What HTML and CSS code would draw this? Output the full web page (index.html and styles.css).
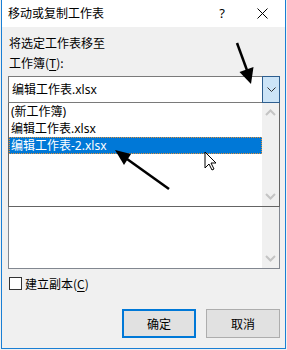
FILE: index.html
```html
<!DOCTYPE html>
<html lang="zh-CN">
<head>
<meta charset="utf-8">
<title>移动或复制工作表</title>
<link rel="stylesheet" href="styles.css">
</head>
<body>
<div class="window">
  <div class="titlebar">
    <span class="title">移动或复制工作表</span>
    <span class="tbtn help">?</span>
    <span class="tbtn close">
      <svg width="11" height="11" viewBox="0 0 11 11"><path d="M0.5 0.5 L10.5 10.5 M10.5 0.5 L0.5 10.5" stroke="#000" stroke-width="1"/></svg>
    </span>
  </div>
  <div class="content">
    <div class="label">将选定工作表移至</div>
    <div class="label">工作簿(<u>T</u>):</div>
    <div class="combo">
      <div class="combo-text">编辑工作表.xlsx</div>
      <div class="combo-btn">
        <svg width="9" height="6" viewBox="0 0 9 6"><path d="M0.5 0.5 L4.5 4.5 L8.5 0.5" fill="none" stroke="#333" stroke-width="1"/></svg>
      </div>
      <div class="popup">
        <div class="popup-items">
          <div class="item">(新工作簿)</div>
          <div class="item">编辑工作表.xlsx</div>
          <div class="item selected">编辑工作表-2.xlsx</div>
        </div>
        <div class="vscroll">
          <svg class="chev" width="11" height="7" viewBox="0 0 11 7"><path d="M1 6 L5.5 1.5 L10 6" fill="none" stroke="#c4c4c4" stroke-width="2"/></svg>
          <svg class="chev" width="11" height="7" viewBox="0 0 11 7"><path d="M1 1 L5.5 5.5 L10 1" fill="none" stroke="#c4c4c4" stroke-width="2"/></svg>
        </div>
      </div>
    </div>
    <div class="listbox">
      <div class="list-area"></div>
      <div class="vscroll">
        <svg class="chev" width="11" height="7" viewBox="0 0 11 7"><path d="M1 6 L5.5 1.5 L10 6" fill="none" stroke="#c4c4c4" stroke-width="2"/></svg>
        <svg class="chev" width="11" height="7" viewBox="0 0 11 7"><path d="M1 1 L5.5 5.5 L10 1" fill="none" stroke="#c4c4c4" stroke-width="2"/></svg>
      </div>
    </div>
    <label class="check-row">
      <span class="checkbox"></span>
      <span class="check-label">建立副本(<u>C</u>)</span>
    </label>
    <div class="buttons">
      <div class="btn primary">确定</div>
      <div class="btn">取消</div>
    </div>
  </div>
</div>
<svg class="annot" width="287" height="350" viewBox="0 0 287 350">
  <line x1="237" y1="43" x2="248" y2="73" stroke="#000" stroke-width="2.5"/>
  <polygon points="251,84 239.5,72 253.5,67" fill="#000"/>
  <line x1="169" y1="189" x2="127" y2="159" stroke="#000" stroke-width="2.5"/>
  <polygon points="115,150 131,154 124,165" fill="#000"/>
  <path transform="translate(204.5 151.5)" d="M0.5 0.5 L0.5 16.5 L4.5 12.5 L7.5 18.5 L9.5 17.5 L6.5 11.5 L11.5 11.5 Z" fill="#fff" stroke="#000" stroke-width="1" stroke-linejoin="miter"/>
</svg>
</body>
</html>
```
FILE: styles.css
```css
* { box-sizing: border-box; }
html, body { margin: 0; padding: 0; }
body {
  background: #f0f0f0;
  width: 287px;
  height: 350px;
  overflow: hidden;
  position: relative;
  font-family: "Noto Sans", "Noto Sans CJK SC", sans-serif;
  font-size: 12px;
  color: #000;
}
.window {
  margin-left: 1px;
  width: 285px;
  height: 349px;
  border: 1px solid #1a7fd4;
  border-top: none;
  background: #f0f0f0;
  display: flex;
  flex-direction: column;
}
.titlebar {
  height: 27px;
  background: #fff;
  display: flex;
  align-items: center;
  padding-left: 6px;
  padding-bottom: 1px;
}
.title {
  flex: 1;
  font-size: 12px;
  line-height: 16px;
  font-family: "Noto Sans CJK SC", sans-serif;
}
.tbtn {
  display: flex;
  align-items: center;
  justify-content: center;
}
.help {
  width: 12px;
  margin-right: 29px;
  font-family: "Noto Sans", sans-serif;
  font-size: 13px;
  line-height: 16px;
}
.close {
  width: 11px;
  margin-right: 17px;
}
.content {
  flex: 1;
  padding: 6px 5px 0 6px;
  display: flex;
  flex-direction: column;
}
.label {
  height: 20px;
  line-height: 20px;
  padding-left: 1px;
  font-family: "Noto Sans CJK SC", sans-serif;
}
.label u { text-underline-offset: 2px; }
.combo {
  margin-top: 3px;
  height: 27px;
  border: 1px solid #7a7a7a;
  background: #fff;
  display: flex;
  position: relative;
}
.combo-text {
  flex: 1;
  padding-left: 3px;
  line-height: 25px;
}
.combo-btn {
  width: 18px;
  margin: -1px -1px -1px 0;
  height: 27px;
  border: 1px solid #2d5e8f;
  background: #cce4f7;
  display: flex;
  align-items: center;
  justify-content: center;
  padding-top: 1px;
}
.popup {
  position: absolute;
  left: -1px;
  right: -1px;
  top: 26px;
  height: 104px;
  background: #fff;
  border: 1px solid #646464;
  border-top: none;
  display: flex;
  z-index: 2;
}
.popup-items {
  flex: 1;
  display: flex;
  flex-direction: column;
}
.item {
  height: 17px;
  line-height: 17px;
  padding-left: 2px;
  white-space: nowrap;
}
.selected {
  background: #0078d7;
  color: #fff;
  border: 1px dotted #e0903a;
  line-height: 15px;
  padding-left: 1px;
}
.vscroll {
  width: 17px;
  background: #f0f0f0;
  display: flex;
  flex-direction: column;
  justify-content: space-between;
  align-items: center;
  padding: 6px 0 6px;
}
.chev { display: block; }
.listbox {
  height: 166px;
  border: 1px solid #828790;
  background: #fff;
  display: flex;
}
.list-area { flex: 1; }
.listbox .vscroll { padding-bottom: 6px; }
.check-row {
  margin-top: 8px;
  height: 13px;
  display: flex;
  align-items: center;
  padding-left: 1px;
}
.checkbox {
  width: 13px;
  height: 13px;
  border: 1px solid #333;
  background: #fff;
}
.check-label {
  margin-left: 3px;
  line-height: 16px;
  font-family: "Noto Sans CJK SC", sans-serif;
}
.check-label u { text-underline-offset: 2px; }
.buttons {
  margin-top: 19px;
  display: flex;
  justify-content: flex-end;
  gap: 10px;
}
.btn {
  width: 74px;
  height: 29px;
  border: 1px solid #adadad;
  background: #e1e1e1;
  display: flex;
  align-items: center;
  justify-content: center;
  font-family: "Noto Sans CJK SC", sans-serif;
}
.btn.primary {
  border: 2px solid #0078d7;
}
.annot {
  position: absolute;
  left: 0;
  top: 0;
  pointer-events: none;
  z-index: 5;
}
```
